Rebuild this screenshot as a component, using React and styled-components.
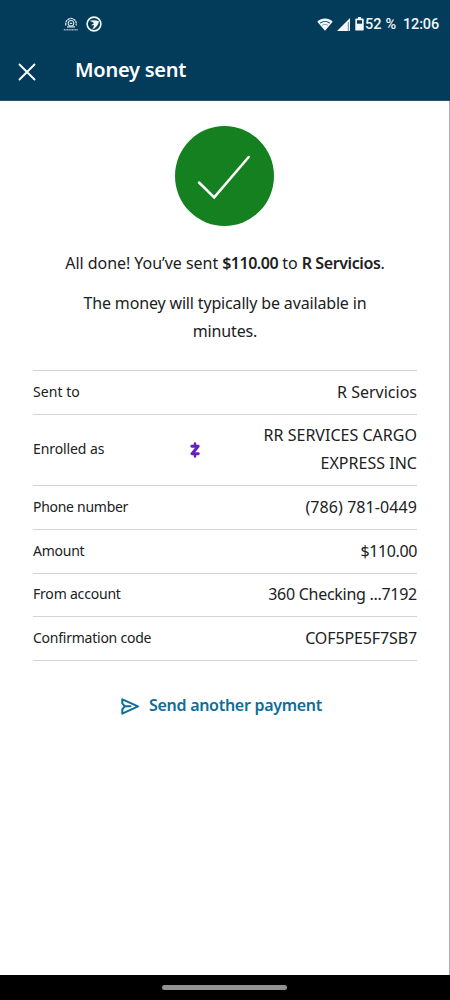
import React from "react";
import styled, { createGlobalStyle } from "styled-components";

const GlobalStyle = createGlobalStyle`
  *, *::before, *::after { box-sizing: border-box; }
  body { margin: 0; background: #fff; }
`;

const Screen = styled.div`
  width: 450px;
  height: 1000px;
  display: flex;
  flex-direction: column;
  overflow: hidden;
  font-family: "Noto Sans", "Open Sans", sans-serif;
  color: #202122;
`;

const Header = styled.header`
  height: 101px;
  flex: none;
  background: #033c5a;
  color: #fff;
  border-bottom: 1px solid #23536d;
`;

const StatusBar = styled.div`
  height: 48px;
  padding: 0 11px 0 63px;
  display: flex;
  align-items: center;
  font-family: Roboto, sans-serif;
  font-size: 14.5px;
  font-weight: 500;
  color: #f1f6f8;
`;

const Notifications = styled.div`
  display: flex;
  align-items: center;
  gap: 7px;
  flex: 1;
`;

const Signals = styled.div`
  display: flex;
  align-items: center;
  gap: 4px;
  margin-right: 1px;
`;

const StatusText = styled.span`
  letter-spacing: ${(p) => p.$spacing || 0}px;
  white-space: pre;
  & + & { margin-left: 6.5px; }
`;

const TitleBar = styled.div`
  height: 44px;
  padding-left: 18px;
  display: flex;
  align-items: center;
`;

const CloseButton = styled.button`
  width: 18px;
  height: 18px;
  margin: 4px 39px 0 0;
  padding: 0;
  border: 0;
  background: none;
  display: flex;
`;

const Title = styled.h1`
  margin: 0;
  font-size: 20px;
  line-height: 28px;
  font-weight: 600;
  letter-spacing: ${(p) => p.$spacing || 0}px;
`;

const Content = styled.main`
  flex: 1;
  padding: 25px 32px 0 33px;
  display: flex;
  flex-direction: column;
  align-items: center;
  border-right: 1px solid #aaadaf;
`;

const SuccessMark = styled.svg`
  width: 100px;
  height: 101px;
  flex: none;
`;

const Message = styled.p`
  margin: ${(p) => p.$top}px 0 0;
  font-size: 16px;
  line-height: 28px;
  text-align: center;
  white-space: nowrap;
  letter-spacing: ${(p) => p.$spacing || 0}px;
`;

const Strong = styled.b`
  font-weight: 600;
  letter-spacing: ${(p) => p.$spacing || 0}px;
`;

const Details = styled.dl`
  width: 100%;
  margin: 25px 0 0;
  border-top: 1px solid #d2d3d4;
`;

const Row = styled.div`
  display: flex;
  align-items: center;
  padding: 6.6px 0 8.1px;
  border-bottom: 1px solid #d2d3d4;
`;

const Label = styled.dt`
  flex: 1;
  font-size: 14px;
  line-height: 28px;
  letter-spacing: ${(p) => p.$spacing || 0}px;
`;

const Badge = styled.svg`
  width: 10px;
  height: 16px;
  flex: none;
  margin: 2px 64px 0 0;
`;

const Value = styled.dd`
  margin: 0;
  font-size: 16px;
  line-height: 28px;
  text-align: right;
  white-space: pre-line;
  letter-spacing: ${(p) => p.$spacing || 0}px;
`;

const ActionLink = styled.a`
  margin: 30px 0 0 -7px;
  display: flex;
  align-items: center;
  gap: 9px;
  color: #0f6d99;
  font-size: 16px;
  line-height: 28px;
  font-weight: 600;
  letter-spacing: ${(p) => p.$spacing || 0}px;
  svg { margin-top: 3px; }
`;

const NavBar = styled.footer`
  height: 25px;
  flex: none;
  background: #000;
  display: flex;
  justify-content: center;
  align-items: center;
`;

const NavPill = styled.div`
  width: 125px;
  height: 5px;
  margin-right: 1px;
  border-radius: 3px;
  background: #929292;
`;

const rows = [
  { label: "Sent to", value: "R Servicios", ls: 0.05, vs: 0 },
  { label: "Enrolled as", value: "RR SERVICES CARGO\nEXPRESS INC", badge: true, ls: -0.1, vs: 0.02 },
  { label: "Phone number", value: "(786) 781-0449", ls: -0.28, vs: 0.08 },
  { label: "Amount", value: "$110.00", ls: -0.25, vs: -0.38 },
  { label: "From account", value: "360 Checking ...7192", ls: -0.2, vs: -0.28 },
  { label: "Confirmation code", value: "COF5PE5F7SB7", ls: -0.24, vs: -0.12 },
];

function BroadcastIcon() {
  return (
    <svg width="16" height="16" viewBox="0 0 16 16" fill="none" stroke="#d5e1e7">
      <path d="M3 9.500a5.300 5.300 0 1 1 10 0" strokeWidth="1.300" strokeDasharray="2.600 .5" />
      <circle cx="8" cy="7.300" r="2.800" strokeWidth="1.100" />
      <path d="M6.800 7.300h2.400M4 10.800h8" strokeWidth="1.300" />
      <path d="M.8 13.800h14.400" strokeWidth="1.500" strokeDasharray="1.200 .4" opacity=".7" />
    </svg>
  );
}

function SwooshIcon() {
  return (
    <svg width="16" height="16" viewBox="0 0 16 16">
      <circle cx="8" cy="8" r="6.900" fill="none" stroke="#f3f7f8" strokeWidth="1.600" />
      <path d="M3.200 4.900C6 3.900 10 4 13 5.200c-.7 3.900-3 7-6.800 8.200 1-1.700 1.700-3 1.900-4.200L5 9.200l3-2C6.900 6 5.300 5.200 3.200 4.900Z" fill="#f3f7f8" />
    </svg>
  );
}

function WifiIcon() {
  return (
    <svg width="16" height="13" viewBox="0 0 16 13">
      <path d="M.3 3.700C4.600-.6 11.400-.6 15.700 3.700L8 12.800Z" fill="#f3f7f8" />
      <path d="M3.200 5.100c2.800-2.200 6.800-2.200 9.600 0" fill="none" stroke="#033c5a" strokeWidth="1.100" />
      <path d="M5 7.300c1.800-1.200 4.200-1.200 6 0" fill="none" stroke="#6d8fa1" strokeWidth=".8" />
    </svg>
  );
}

function SignalIcon() {
  return (
    <svg width="14" height="13" viewBox="0 0 14 13">
      <path d="M0 13 13 0v13Z" fill="#f3f7f8" />
      <path d="M11.300 4v9" stroke="#63869a" strokeWidth="1" />
    </svg>
  );
}

function BatteryIcon() {
  return (
    <svg width="9" height="14" viewBox="0 0 9 14">
      <path d="M3 0h3v1.500h1.800a.9.9 0 0 1 .9.900v10.300a.9.9 0 0 1-.9.900H1.200a.9.9 0 0 1-.9-.900V2.400a.9.9 0 0 1 .9-.900H3Z" fill="#f3f7f8" />
      <path d="M2 3.200h5v3.500H2Z" fill="#033c5a" />
    </svg>
  );
}

function SendIcon() {
  return (
    <svg width="19" height="17" viewBox="0 0 19 17" fill="none" stroke="#0f6d99" strokeWidth="2" strokeLinejoin="round" strokeLinecap="round">
      <path d="M1.300 1.300 17 8.300 1.300 15.600V11.400L3.800 8.300 1.300 5.300Z" />
      <path d="M3.800 8.300h5.700" />
    </svg>
  );
}

export default function App() {
  return (
    <Screen>
      <GlobalStyle />
      <Header>
        <StatusBar>
          <Notifications>
            <BroadcastIcon />
            <SwooshIcon />
          </Notifications>
          <Signals>
            <WifiIcon />
            <SignalIcon />
            <BatteryIcon />
          </Signals>
          <StatusText $spacing={0.2}>52 %</StatusText>
          <StatusText $spacing={-0.15}>12:06</StatusText>
        </StatusBar>
        <TitleBar>
          <CloseButton aria-label="Close">
            <svg width="18" height="18" viewBox="0 0 18 18" stroke="#fff" strokeWidth="1.800" strokeLinecap="round">
              <path d="m1.500 1.500 15 15m0-15-15 15" />
            </svg>
          </CloseButton>
          <Title $spacing={-0.25}>Money sent</Title>
        </TitleBar>
      </Header>
      <Content>
        <SuccessMark viewBox="0 0 100 101">
          <ellipse cx="49.500" cy="50" rx="49.500" ry="50" fill="#14801f" />
          <path d="M24 56.500 39.200 71.300 73.700 31" fill="none" stroke="#fff" strokeWidth="2.500" strokeLinecap="round" />
        </SuccessMark>
        <Message $top={22} $spacing={-0.05}>
          All done! You’ve sent <Strong $spacing={-0.5}>$110.00</Strong> to{" "}
          <Strong $spacing={-0.4}>R Servicios</Strong>.
        </Message>
        <Message $top={12} $spacing={-0.16}>
          The money will typically be available in
          <br />
          minutes.
        </Message>
        <Details>
          {rows.map((row) => (
            <Row key={row.label}>
              <Label $spacing={row.ls}>{row.label}</Label>
              {row.badge && (
                <Badge viewBox="0 0 10 16" fill="none" stroke="#6a1fc0" strokeLinecap="round" strokeLinejoin="round">
                  <path d="M1.800 4.300h6.400L2 11.700h6.300" strokeWidth="2.900" />
                  <path d="M5 1.600v2M5 12.500v2" strokeWidth="2.500" />
                </Badge>
              )}
              <Value $spacing={row.vs}>{row.value}</Value>
            </Row>
          ))}
        </Details>
        <ActionLink $spacing={-0.29}>
          <SendIcon />
          Send another payment
        </ActionLink>
      </Content>
      <NavBar>
        <NavPill />
      </NavBar>
    </Screen>
  );
}
